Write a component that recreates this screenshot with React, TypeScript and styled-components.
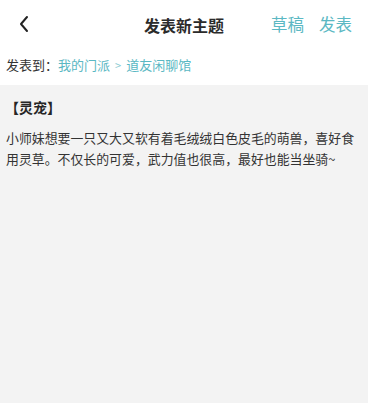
import React from "react";
import styled, { createGlobalStyle } from "styled-components";

const Global = createGlobalStyle`
  html, body { margin: 0; padding: 0; background: #ffffff; }
  body { font-family: "Noto Sans CJK SC", "Noto Sans", sans-serif; }
  #root { width: 368px; height: 403px; }
`;

const Page = styled.div`
  width: 368px;
  height: 403px;
  display: flex;
  flex-direction: column;
  background: #ffffff;
`;

const Header = styled.div`
  height: 50px;
  display: flex;
  align-items: center;
  position: relative;
  padding: 0 16px 0 14px;
`;

const BackButton = styled.div`
  width: 20px;
  height: 20px;
  display: flex;
  align-items: center;
  justify-content: center;
  margin-top: -2px;
`;

const Title = styled.div`
  position: absolute;
  left: 0;
  right: 0;
  text-align: center;
  font-size: 16px;
  font-weight: 700;
  color: #2b2b2b;
  top: 13px;
  pointer-events: none;
`;

const Actions = styled.div`
  margin-left: auto;
  display: flex;
  gap: 15px;
  margin-top: -2px;
`;

const Action = styled.span`
  font-size: 16.5px;
  color: #5bb8c3;
`;

const Crumbs = styled.div`
  height: 35px;
  display: flex;
  align-items: center;
  padding: 0 6px;
  font-size: 13px;
  color: #333333;
  margin-top: -3px;
`;

const Link = styled.span`
  color: #5bb8c3;
`;

const Sep = styled.span`
  color: #8ccbd2;
  margin: 0 5px 0 5px;
  font-size: 11px;
`;

const Body = styled.div`
  flex: 1;
  background: #f3f3f3;
  padding: 10px 6px;
  margin-top: 3px;
`;

const Heading = styled.div`
  font-size: 14px;
  font-weight: 700;
  color: #262626;
  margin-left: -1px;
  line-height: 24px;
`;

const Text = styled.p`
  margin: 8px 0 0;
  font-size: 12.9px;
  line-height: 21px;
  color: #333333;
`;

export default function App() {
  return (
    <Page>
      <Global />
      <Header>
        <BackButton>
          <svg width="12" height="18" viewBox="0 0 12 18" fill="none">
            <path d="M9 2 L3 9 L9 16" stroke="#222" strokeWidth="2" strokeLinecap="round" strokeLinejoin="round" />
          </svg>
        </BackButton>
        <Title>发表新主题</Title>
        <Actions>
          <Action>草稿</Action>
          <Action>发表</Action>
        </Actions>
      </Header>
      <Crumbs>
        发表到：<Link>我的门派</Link>
        <Sep>&gt;</Sep>
        <Link>道友闲聊馆</Link>
      </Crumbs>
      <Body>
        <Heading>【灵宠】</Heading>
        <Text>
          小师妹想要一只又大又软有着毛绒绒白色皮毛的萌兽，喜好食用灵草。不仅长的可爱，武力值也很高，最好也能当坐骑~
        </Text>
      </Body>
    </Page>
  );
}
